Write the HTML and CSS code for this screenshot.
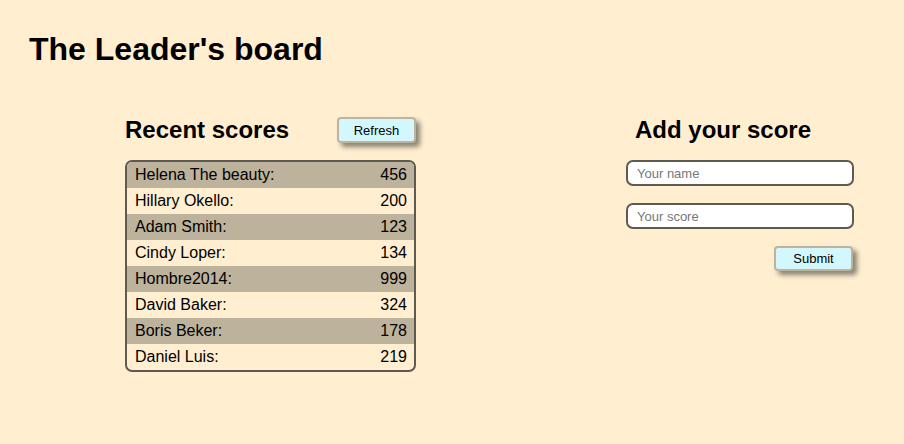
FILE: index.html
```html
<!DOCTYPE html>
<html lang="en">
<head>
<meta charset="utf-8">
<title>The Leader's board</title>
<link rel="stylesheet" href="styles.css">
</head>
<body>
<main class="page">
  <h1 class="title">The Leader's board</h1>
  <div class="board">
    <section class="scores">
      <div class="scores-head">
        <h2 class="heading">Recent scores</h2>
        <button class="btn" type="button">Refresh</button>
      </div>
      <ul class="list">
        <li class="row"><span>Helena The beauty:</span><span>456</span></li>
        <li class="row"><span>Hillary Okello:</span><span>200</span></li>
        <li class="row"><span>Adam Smith:</span><span>123</span></li>
        <li class="row"><span>Cindy Loper:</span><span>134</span></li>
        <li class="row"><span>Hombre2014:</span><span>999</span></li>
        <li class="row"><span>David Baker:</span><span>324</span></li>
        <li class="row"><span>Boris Beker:</span><span>178</span></li>
        <li class="row"><span>Daniel Luis:</span><span>219</span></li>
      </ul>
    </section>
    <section class="add">
      <h2 class="heading add-heading">Add your score</h2>
      <form class="form">
        <input class="field" type="text" placeholder="Your name">
        <input class="field" type="text" placeholder="Your score">
        <button class="btn submit" type="button">Submit</button>
      </form>
    </section>
  </div>
</main>
</body>
</html>
```

FILE: styles.css
```css
html, body {
  margin: 0;
  background: #ffeed0;
}

body {
  font-family: "Liberation Sans", Arial, sans-serif;
  color: #000;
}

.page {
  padding: 31px 29px 0 29px;
}

.title {
  margin: 0;
  font-size: 32px;
  line-height: 37px;
  font-weight: bold;
}

.board {
  display: flex;
  justify-content: space-between;
  margin-top: 48px;
  padding-left: 96px;
  padding-right: 21px;
}

.scores {
  width: 291px;
}

.scores-head {
  display: flex;
  align-items: center;
  justify-content: space-between;
  height: 28px;
}

.heading {
  margin: 0;
  font-size: 24px;
  line-height: 28px;
  font-weight: bold;
}

.btn {
  box-sizing: border-box;
  width: 79px;
  height: 26px;
  padding: 0;
  font-family: "Liberation Sans", Arial, sans-serif;
  font-size: 13px;
  color: #000;
  background: #d2f7fd;
  border: 2px solid #bdb39e;
  border-radius: 4px;
  box-shadow: 4px 4px 5px #8a8370;
}

.list {
  list-style: none;
  margin: 16px 0 0 0;
  padding: 0;
  border: 2px solid #5e5a52;
  border-radius: 7px;
  overflow: hidden;
}

.row {
  display: flex;
  justify-content: space-between;
  height: 26px;
  line-height: 26px;
  padding: 0 7px 0 8px;
  font-size: 16px;
}

.row:nth-child(odd) {
  background: #bdb29b;
}

.add {
  width: 228px;
}

.add-heading {
  padding-left: 9px;
}

.form {
  display: flex;
  flex-direction: column;
  margin-top: 16px;
}

.field {
  box-sizing: border-box;
  width: 228px;
  height: 26px;
  margin: 0 0 17px 0;
  padding: 0 9px;
  font-family: "Liberation Sans", Arial, sans-serif;
  font-size: 13px;
  background: #fff;
  border: 2px solid #5e5a52;
  border-radius: 7px;
  outline: none;
}

.field::placeholder {
  color: #777;
}

.submit {
  align-self: flex-end;
  width: 79px;
  height: 25px;
  margin-right: 1px;
}
```
